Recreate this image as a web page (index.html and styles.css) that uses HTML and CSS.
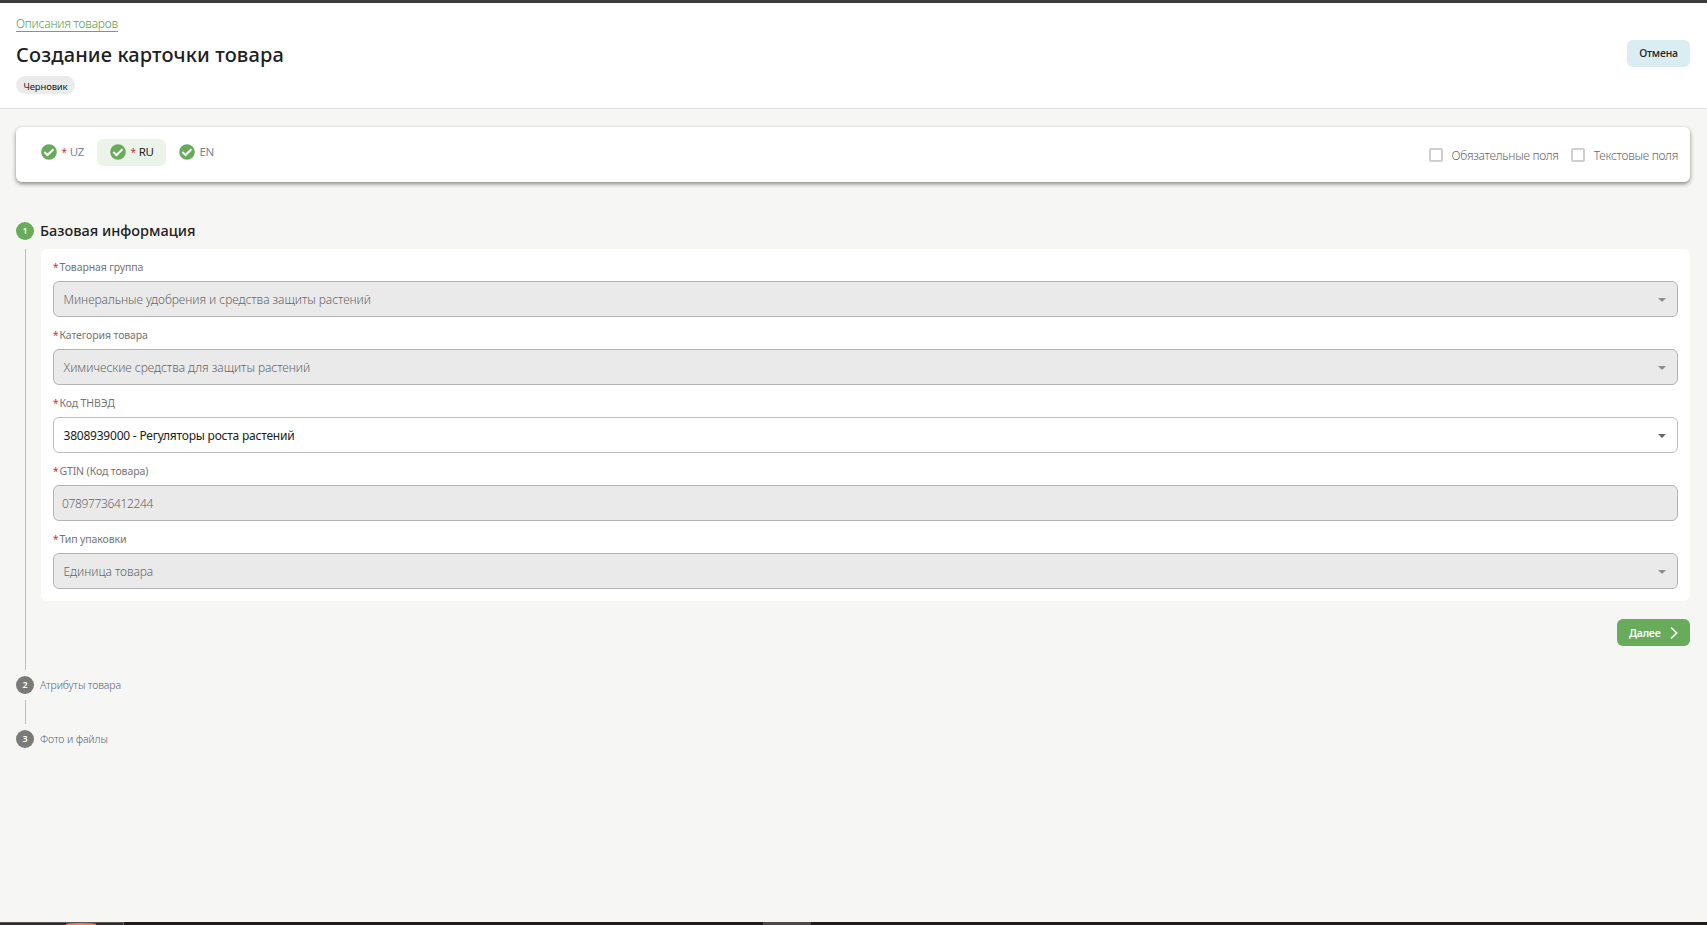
FILE: index.html
```html
<!DOCTYPE html>
<html lang="ru">

<head>
    <meta charset="UTF-8">
    <meta name="viewport" content="width=device-width, initial-scale=1.0">
    <title>Создание карточки товара</title>
    <link rel="stylesheet" href="styles.css">
</head>

<body>
    <svg width="0" height="0" class="sprite">
        <symbol id="check" viewBox="0 0 16 16">
            <circle cx="8" cy="8" r="7.8" fill="#67ab5b" />
            <path d="M3.3 8.1 6.5 11.1 12.5 5.3" fill="none" stroke="#fff" stroke-width="2.1" />
        </symbol>
    </svg>

    <header class="header">
        <div class="header-info">
            <a href="#" class="back-link">Описания товаров</a>
            <h1>Создание карточки товара</h1>
            <span class="status">Черновик</span>
        </div>
        <button class="btn btn-cancel">Отмена</button>
    </header>

    <main class="content">
        <section class="toolbar">
            <div class="tabs">
                <div class="tab"><svg class="check"><use href="#check" /></svg><span class="star">*</span>UZ</div>
                <div class="tab active"><svg class="check"><use href="#check" /></svg><span class="star">*</span>RU</div>
                <div class="tab"><svg class="check"><use href="#check" /></svg>EN</div>
            </div>
            <div class="filters">
                <label class="filter"><span class="box"></span>Обязательные поля</label>
                <label class="filter"><span class="box"></span>Текстовые поля</label>
            </div>
        </section>

        <section class="step">
            <div class="step-head current"><span class="num">1</span><h2>Базовая информация</h2></div>
            <div class="step-body">
                <div class="panel">
                    <div class="field">
                        <div class="label"><span class="star">*</span>Товарная группа</div>
                        <div class="select disabled"><span>Минеральные удобрения и средства защиты растений</span><i class="arrow"></i></div>
                    </div>
                    <div class="field">
                        <div class="label"><span class="star">*</span>Категория товара</div>
                        <div class="select disabled"><span>Химические средства для защиты растений</span><i class="arrow"></i></div>
                    </div>
                    <div class="field">
                        <div class="label"><span class="star">*</span>Код ТНВЭД</div>
                        <div class="select"><span>3808939000 - Регуляторы роста растений</span><i class="arrow"></i></div>
                    </div>
                    <div class="field">
                        <div class="label"><span class="star">*</span>GTIN (Код товара)</div>
                        <div class="select disabled input"><span>07897736412244</span></div>
                    </div>
                    <div class="field">
                        <div class="label"><span class="star">*</span>Тип упаковки</div>
                        <div class="select disabled"><span>Единица товара</span><i class="arrow"></i></div>
                    </div>
                </div>
                <button class="btn btn-next">Далее
                    <svg width="8" height="14" viewBox="0 0 8 14"><path d="M1 1.5 6.7 7 1 12.5" fill="none" stroke="#fff" stroke-width="1.6" /></svg>
                </button>
            </div>
        </section>

        <section class="step">
            <div class="step-head"><span class="num">2</span><span class="step-name">Атрибуты товара</span></div>
            <div class="step-body collapsed"></div>
        </section>

        <section class="step">
            <div class="step-head"><span class="num">3</span><span class="step-name">Фото и файлы</span></div>
        </section>
    </main>

    <footer class="taskbar">
        <div class="task-start"><span class="glow"></span></div>
        <div class="task-item"></div>
    </footer>
</body>

</html>
```
FILE: styles.css
```css
* {
    box-sizing: border-box;
}

body {
    font-family: 'Noto Sans', 'Open Sans', sans-serif;
    margin: 0;
    height: 925px;
    display: flex;
    flex-direction: column;
    overflow: hidden;
    background-color: #f6f6f4;
    color: #212121;
    font-size: 12px;
}

.sprite {
    display: none;
}

.header {
    display: flex;
    justify-content: space-between;
    height: 109px;
    padding: 12px 17px 0 16px;
    background-color: white;
    border-top: 3px solid #3c3a3b;
    border-bottom: 1px solid #dedede;
}

.header-info {
    display: flex;
    flex-direction: column;
    align-items: flex-start;
}

.back-link {
    height: 17px;
    line-height: 18px;
    font-weight: 300;
    letter-spacing: -0.22px;
    color: #55a048;
    text-decoration: none;
    border-bottom: 1px solid #67ab5b;
}

h1 {
    margin: 8px 0 0;
    height: 30px;
    line-height: 30px;
    font-size: 20px;
    font-weight: 500;
    letter-spacing: 0.14px;
}

.status {
    height: 18px;
    margin-top: 6px;
    padding: 0 7.5px;
    line-height: 21px;
    font-size: 9.5px;
    letter-spacing: -0.15px;
    border-radius: 9px;
    background-color: #ebebeb;
}

.btn {
    height: 27px;
    padding: 0 12px;
    border: none;
    border-radius: 6px;
    font-family: inherit;
    font-size: 10.5px;
    font-weight: 500;
    letter-spacing: -0.2px;
}

.btn-cancel {
    width: 63px;
    margin-top: 25px;
    padding-bottom: 2px;
    background-color: #daedf3;
    color: #212121;
}

.content {
    flex: 1;
    padding: 18px 17px 0 16px;
}

.toolbar {
    display: flex;
    justify-content: space-between;
    height: 55px;
    padding: 12px 12px 0;
    border-radius: 6px;
    background-color: white;
    box-shadow: 0 2px 4px rgba(0, 0, 0, 0.45);
    margin-bottom: 40px;
}

.tabs {
    display: flex;
}

.tab {
    display: flex;
    align-items: center;
    width: 69px;
    height: 27px;
    padding: 0 0 2px 12.5px;
    border-radius: 6px;
    font-size: 11.5px;
    letter-spacing: -0.3px;
    color: #78839a;
}

.tab.active {
    background-color: #ecf4ea;
    color: #212121;
}

.check {
    width: 16px;
    height: 16px;
    margin-right: 5px;
}

.star {
    color: #d32f2f;
    font-size: 10px;
    margin-right: 3px;
}

.filters {
    display: flex;
    gap: 12px;
    height: 32px;
    align-items: center;
}

.filter {
    display: flex;
    align-items: center;
    gap: 9px;
    color: #686868;
    font-weight: 300;
    letter-spacing: -0.27px;
}

.box {
    width: 14px;
    height: 14px;
    border: 2px solid #cfcfcf;
    border-radius: 2px;
}

.step-head {
    display: flex;
    align-items: center;
    gap: 6px;
    height: 18px;
    font-size: 10.5px;
    font-weight: 300;
    letter-spacing: -0.12px;
    color: #56637d;
}

.step-name {
    margin-bottom: 1px;
}

.num {
    width: 18px;
    height: 18px;
    border-radius: 50%;
    line-height: 17px;
    text-align: center;
    font-size: 9px;
    font-weight: 600;
    color: white;
    background-color: #7a7a78;
}

.current .num {
    background-color: #67ab5b;
}

h2 {
    margin: 0 0 2px;
    font-size: 14.5px;
    font-weight: 500;
    letter-spacing: 0;
    color: #212121;
}

.step-body {
    display: flex;
    flex-direction: column;
    align-items: flex-end;
    height: 421px;
    margin: 9px 0 6px 9px;
    padding-left: 15px;
    border-left: 1px solid #bdbdbd;
}

.step-body.collapsed {
    height: 24px;
    margin-top: 6px;
}

.panel {
    width: 100%;
    height: 352px;
    padding: 10px 12px 0;
    border-radius: 6px;
    background-color: white;
}

.field {
    height: 68px;
}

.label {
    height: 22px;
    line-height: 17px;
    font-size: 10.5px;
    letter-spacing: -0.11px;
    color: #757575;
}

.label .star {
    margin-right: 1px;
}

.select {
    display: flex;
    align-items: center;
    justify-content: space-between;
    height: 36px;
    padding: 0 11px 0 9.5px;
    border: 1px solid #bdbdbd;
    border-radius: 6px;
    letter-spacing: -0.22px;
}

.select.disabled {
    background-color: #eaeaea;
    border-color: #b3b3b3;
    color: #666;
    font-weight: 300;
    letter-spacing: -0.05px;
}

.select.input {
    padding-left: 8px;
    letter-spacing: -0.36px;
}

.arrow {
    margin-top: 2px;
    border: 4px solid transparent;
    border-top-color: #666;
    border-bottom: none;
}

.disabled .arrow {
    border-top-color: #8d8d8d;
}

.btn-next {
    display: flex;
    align-items: center;
    justify-content: space-between;
    width: 73px;
    margin-top: 18px;
    background-color: #67ab5b;
    color: white;
    font-weight: 600;
}

.taskbar {
    display: flex;
    height: 3px;
    background-color: #1e1b1c;
}

.task-start {
    width: 124px;
    padding-left: 66px;
    background-color: #302d2e;
    border-top: 1px solid #575556;
    border-right: 1px solid #6a6869;
}

.glow {
    display: block;
    width: 30px;
    height: 2px;
    border-radius: 50% 50% 0 0;
    background-color: #ee8158;
}

.task-item {
    width: 48px;
    margin-left: 639px;
    background-color: #4a4849;
}
```
